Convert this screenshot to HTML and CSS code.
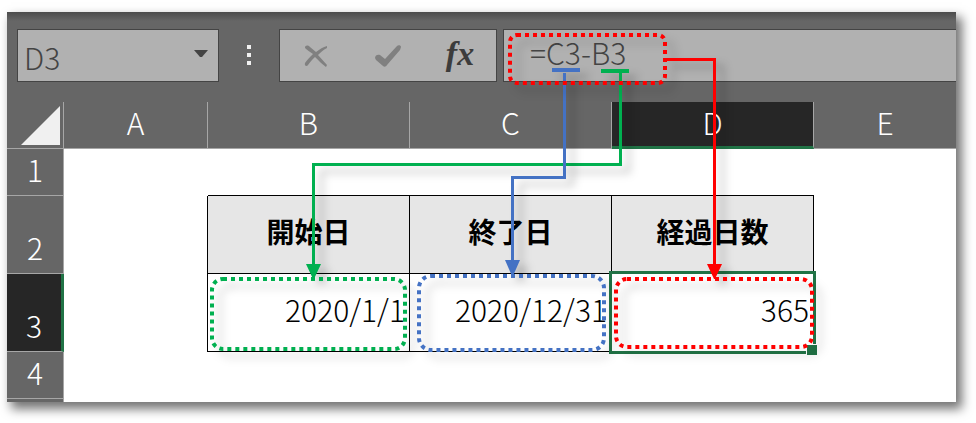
FILE: index.html
```
<!DOCTYPE html>
<html lang="ja">
<head>
	<meta charset="UTF-8">
	<title>経過日数</title>
	<link rel="stylesheet" href="styles.css">
</head>
<body>
	<div class="window">
		<div class="toolbar">
			<div class="name-box">
				<select aria-label="名前ボックス">
					<option>D3</option>
				</select>
				<svg class="caret" width="14" height="7" viewBox="0 0 14 7"><path d="M0 0h14l-6 7h-2z" fill="#444"/></svg>
			</div>
			<div class="grip"><i></i><i></i><i></i></div>
			<div class="buttons">
				<button type="button" aria-label="キャンセル">
					<svg width="24" height="22" viewBox="0 0 24 22"><path d="M1 3C1 0 4 0 6 2L12 7C16 4 19 2 23 1L23 3C19 5 17 7 14 10C17 13 20 17 23 20L22 22C18 19 15 16 11 12C8 15 6 17 4 20C3 22 0 21 1 18C3 15 6 12 9 9C6 7 3 5 1 3Z" fill="#808080"/></svg>
				</button>
				<button type="button" aria-label="入力">
					<svg width="26" height="22" viewBox="0 0 26 22"><path d="M0 13C0 10 3 9 5 10L10 14L22 1C23 0 26 0 26 2L25 5L12 20C11 22 9 22 8 21L1 15Z" fill="#808080"/></svg>
				</button>
				<button type="button" class="fx" aria-label="関数の挿入">fx</button>
			</div>
			<input class="formula" type="text" value="=C3-B3" aria-label="数式バー">
		</div>

		<table class="sheet">
			<colgroup>
				<col class="col-head">
				<col class="col-a">
				<col class="col-data">
				<col class="col-data">
				<col class="col-data">
				<col>
			</colgroup>
			<thead>
				<tr>
					<th class="corner"><svg width="39" height="39" viewBox="0 0 39 39"><path d="M39 0v39H0z" fill="#f0f0f0"/></svg></th>
					<th>A</th>
					<th>B</th>
					<th>C</th>
					<th class="active">D</th>
					<th>E</th>
				</tr>
			</thead>
			<tbody>
				<tr>
					<th>1</th>
					<td></td>
					<td class="line-b"></td>
					<td class="line-b"></td>
					<td class="line-b"></td>
					<td></td>
				</tr>
				<tr class="tall">
					<th>2</th>
					<td class="line-r"></td>
					<td class="title">開始日</td>
					<td class="title">終了日</td>
					<td class="title">経過日数</td>
					<td></td>
				</tr>
				<tr class="tall">
					<th class="active">3</th>
					<td class="line-r"></td>
					<td class="value">2020/1/1</td>
					<td class="value">2020/12/31</td>
					<td class="value selected">365<span class="frame"></span></td>
					<td></td>
				</tr>
				<tr>
					<th>4</th>
					<td></td>
					<td></td>
					<td></td>
					<td></td>
					<td></td>
				</tr>
				<tr class="cut">
					<th></th>
					<td></td>
					<td></td>
					<td></td>
					<td></td>
					<td></td>
				</tr>
			</tbody>
		</table>

		<!-- arrows from the formula to the cells -->
		<svg class="notes" width="949" height="390" viewBox="0 0 949 390">
			<g class="note green">
				<path class="mark" d="M594 59h28"/>
				<path d="M613.5 61V152.5H306.5V254"/>
				<path class="head" d="M299 252h15l-7 15h-1z"/>
				<rect x="205" y="267" width="193" height="70" rx="11"/>
			</g>
			<g class="note blue">
				<path class="mark" d="M545 58h28"/>
				<path d="M557.5 61V165.5H505.5V250"/>
				<path class="head" d="M498 248h15l-7 16h-1z"/>
				<rect x="412" y="264" width="185" height="74" rx="12"/>
			</g>
			<g class="note red">
				<rect x="503" y="23" width="155" height="48" rx="7"/>
				<path d="M658 47.5H707.5V254"/>
				<path class="head" d="M700 252h15l-7 15h-1z"/>
				<rect x="609" y="267" width="196" height="68" rx="11"/>
			</g>
		</svg>
	</div>
</body>
</html>
```

FILE: styles.css
```
*{
	box-sizing: border-box;
}
body{
	margin: 0;
	padding: 12px 20px 20px 7px;
	background-color: #fff;
	font-family: "Noto Sans CJK JP", sans-serif;
	font-size: 30px;
	font-weight: 300;
	line-height: 40px;
}
.window{
	position: relative;
	background-color: #666;
	box-shadow: 5px 6px 10px 1px rgba(0,0,0,0.55);
}
.toolbar{
	display: flex;
	height: 90px;
	padding: 17px 0 20px 10px;
	background: linear-gradient(#4c4c4c, #666 9px);
}
.name-box,.buttons,.formula{
	border: 1px solid #444;
	background-color: #b1b1b1;
}
.name-box{
	position: relative;
	width: 202px;
}
select,button,input{
	margin: 0;
	padding: 0;
	border: 0;
	border-radius: 0;
	background: none;
	color: #444;
	font: inherit;
	appearance: none;
}
.name-box select{
	width: 100%;
	height: 100%;
	padding: 2px 0 0 6px;
}
.caret{
	position: absolute;
	top: 20px;
	right: 10px;
	pointer-events: none;
}
.grip{
	display: flex;
	flex-direction: column;
	gap: 4px;
	width: 60px;
	padding: 16px 0 0 28px;
}
.grip i{
	width: 4px;
	height: 4px;
	background-color: #f0f0f0;
}
.buttons{
	display: flex;
	width: 218px;
	margin-right: 6px;
}
.buttons button{
	display: flex;
	flex: 1;
	align-items: center;
	justify-content: center;
}
.buttons .fx{
	padding-bottom: 4px;
	color: #3c3c3c;
	font: italic bold 34px "Liberation Serif", serif;
}
.formula{
	flex: 1;
	min-width: 0;
	padding: 0 0 8px 26px;
	border: 1px solid #444;
	border-right: 0;
	background-color: #b1b1b1;
}
.sheet{
	width: 100%;
	table-layout: fixed;
	border-collapse: separate;
	border-spacing: 0;
	background-color: #fff;
}
.col-head{
	width: 57px;
}
.col-a{
	width: 144px;
}
.col-data{
	width: 202px;
}
tr{
	height: 47px;
}
.tall{
	height: 78px;
}
.cut{
	height: 3px;
}
th,td{
	padding: 0;
}
th{
	padding-bottom: 6px;
	border-right: 1px solid #a6a6a6;
	border-bottom: 1px solid #a6a6a6;
	background-color: #666;
	color: #fff;
	font-weight: 300;
	vertical-align: bottom;
}
thead th:last-child{
	border-right: 0;
}
.cut th{
	padding: 0;
	border-bottom: 0;
}
.corner{
	padding: 0 3px 3px 0;
	text-align: right;
	line-height: 0;
}
th.active{
	background-color: #262626;
}
thead .active{
	padding-bottom: 4px;
	border-bottom: 3px solid #217346;
}
tbody .active{
	border-right: 3px solid #217346;
}
.line-b{
	border-bottom: 1px solid #000;
}
.line-r{
	border-right: 1px solid #000;
}
.title,.value{
	padding-bottom: 8px;
	border-right: 1px solid #000;
	border-bottom: 1px solid #000;
}
.title{
	background-color: #e6e6e6;
	font-size: 28px;
	font-weight: 700;
	text-align: center;
}
.value{
	padding-right: 4px;
	text-align: right;
}
.selected{
	position: relative;
}
.frame{
	position: absolute;
	inset: -3px;
	border: 3px solid #217346;
}
/* fill handle */
.frame::after{
	content: "";
	position: absolute;
	right: -5px;
	bottom: -5px;
	width: 10px;
	height: 10px;
	border: 1px solid #fff;
	background-color: #217346;
}
.notes{
	position: absolute;
	top: 0;
	left: 0;
	overflow: visible;
	pointer-events: none;
}
.note{
	fill: none;
	stroke-width: 3px;
	filter: drop-shadow(8px 7px 4px rgba(0,0,0,0.25));
}
.note rect{
	stroke-width: 4px;
	stroke-dasharray: 4 4;
}
.note .mark{
	stroke-width: 4px;
}
.note .head{
	stroke: none;
}
.green{
	stroke: #00b050;
}
.green .head{
	fill: #00b050;
}
.blue{
	stroke: #4472c4;
}
.blue .head{
	fill: #4472c4;
}
.red{
	stroke: #f00;
}
.red .head{
	fill: #f00;
}
```
